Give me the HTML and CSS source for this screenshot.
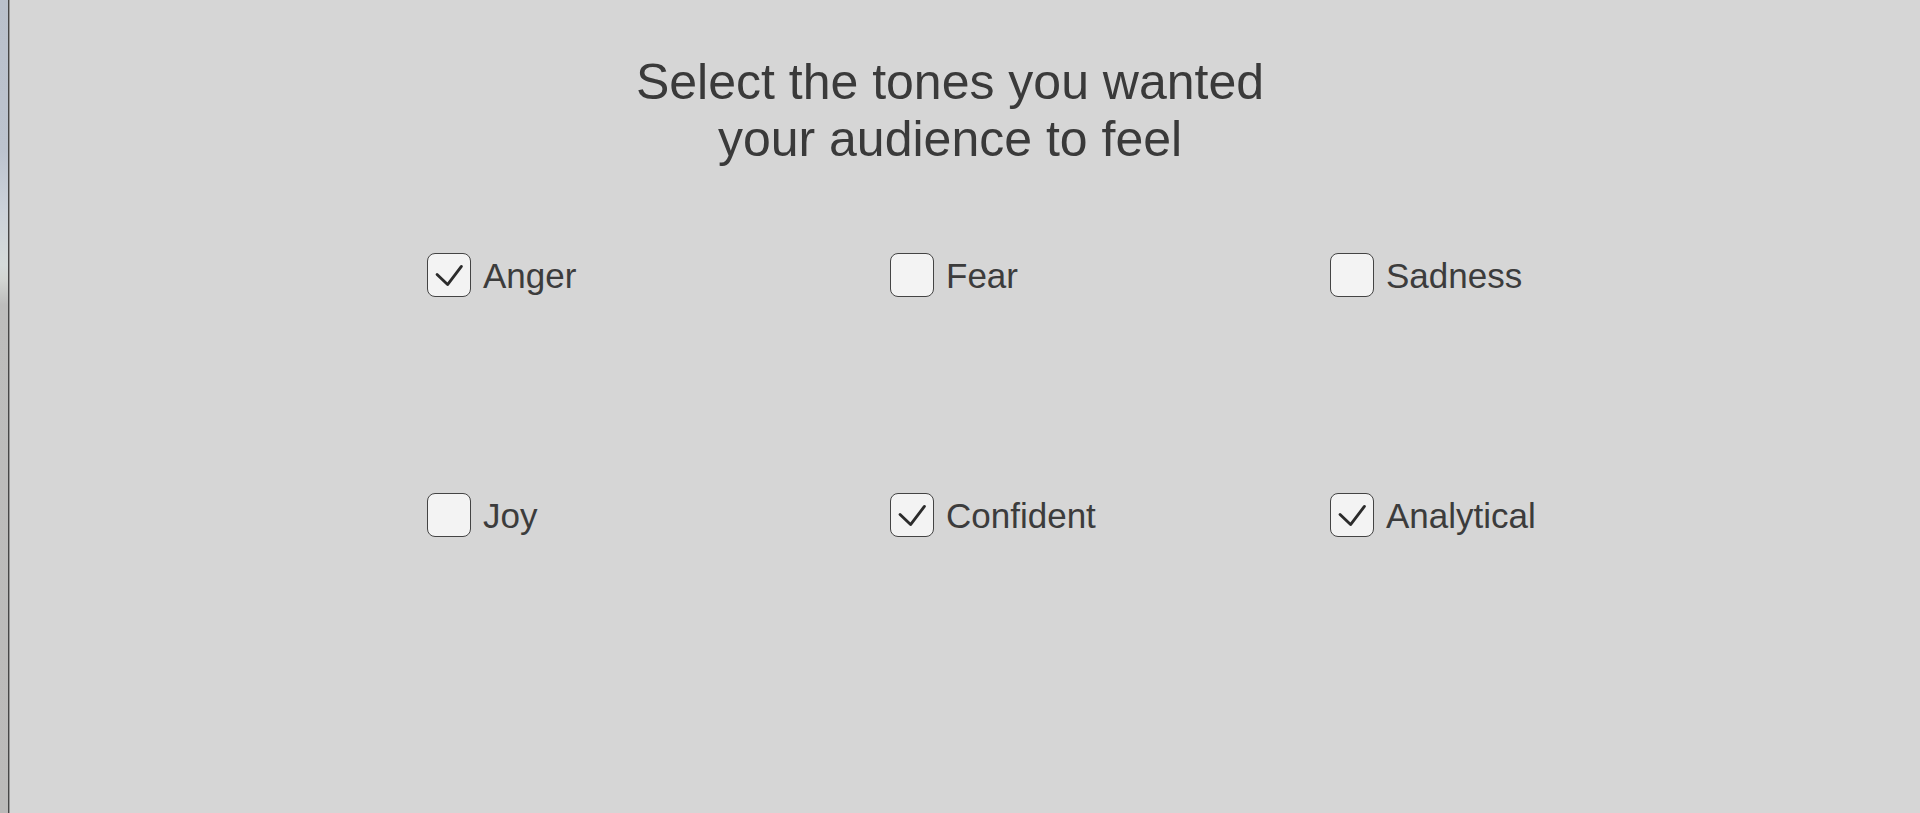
FILE: index.html
```html
<!DOCTYPE html>
<html lang="en">
<head>
<meta charset="utf-8">
<title>Select tones</title>
<link rel="stylesheet" href="styles.css">
</head>
<body>
<div class="frame">
  <div class="strip"></div>
  <div class="divider"></div>
  <main class="content">
    <h1 class="title">Select the tones you wanted<br>your audience to feel</h1>
    <div class="grid">
      <label class="option"><span class="box checked"><svg viewBox="0 0 44 44"><path d="M9.5 21.5 L20.5 32 L35 13"/></svg></span><span class="text">Anger</span></label>
      <label class="option"><span class="box"></span><span class="text">Fear</span></label>
      <label class="option"><span class="box"></span><span class="text">Sadness</span></label>
      <label class="option"><span class="box"></span><span class="text">Joy</span></label>
      <label class="option"><span class="box checked"><svg viewBox="0 0 44 44"><path d="M9.5 21.5 L20.5 32 L35 13"/></svg></span><span class="text">Confident</span></label>
      <label class="option"><span class="box checked"><svg viewBox="0 0 44 44"><path d="M9.5 21.5 L20.5 32 L35 13"/></svg></span><span class="text">Analytical</span></label>
    </div>
  </main>
</div>
</body>
</html>
```

FILE: styles.css
```css
html, body {
  margin: 0;
  padding: 0;
  height: 100%;
  background: #d6d6d6;
  overflow: hidden;
}

.frame {
  display: flex;
  height: 813px;
  font-family: "Liberation Sans", Arial, sans-serif;
  color: #3b3b3b;
}

.strip {
  width: 8px;
  flex: none;
  background: linear-gradient(to bottom,
    #b9c0cb 0px,
    #bcc3ce 150px,
    #ccd2da 210px,
    #d5dbda 265px,
    #d2d5d2 280px,
    #bdbdbc 305px,
    #bbbab9 813px);
}

.divider {
  width: 1px;
  flex: none;
  background: #474747;
  border-right: 1px solid #9a9a9a;
}

.content {
  flex: 1;
  padding-right: 30px;
  background: #d6d6d6;
}

.title {
  margin: 54px 0 0 0;
  font-size: 50px;
  line-height: 57px;
  font-weight: normal;
  text-align: center;
  color: #3a3a3a;
}

.grid {
  display: grid;
  grid-template-columns: 463px 440px auto;
  row-gap: 196px;
  margin: 85px 0 0 417px;
}

.option {
  display: flex;
  align-items: center;
  gap: 12px;
  height: 44px;
}

.box {
  width: 42px;
  height: 42px;
  flex: none;
  border: 1.5px solid #444444;
  border-radius: 8px;
  background: #f3f3f3;
  display: flex;
}

.box svg {
  width: 100%;
  height: 100%;
}

.box svg path {
  fill: none;
  stroke: #2b2b2b;
  stroke-width: 3;
  stroke-linecap: round;
  stroke-linejoin: round;
}

.text {
  font-size: 35px;
  line-height: 44px;
  position: relative;
  top: 1px;
  color: #3c3c3c;
}
```
